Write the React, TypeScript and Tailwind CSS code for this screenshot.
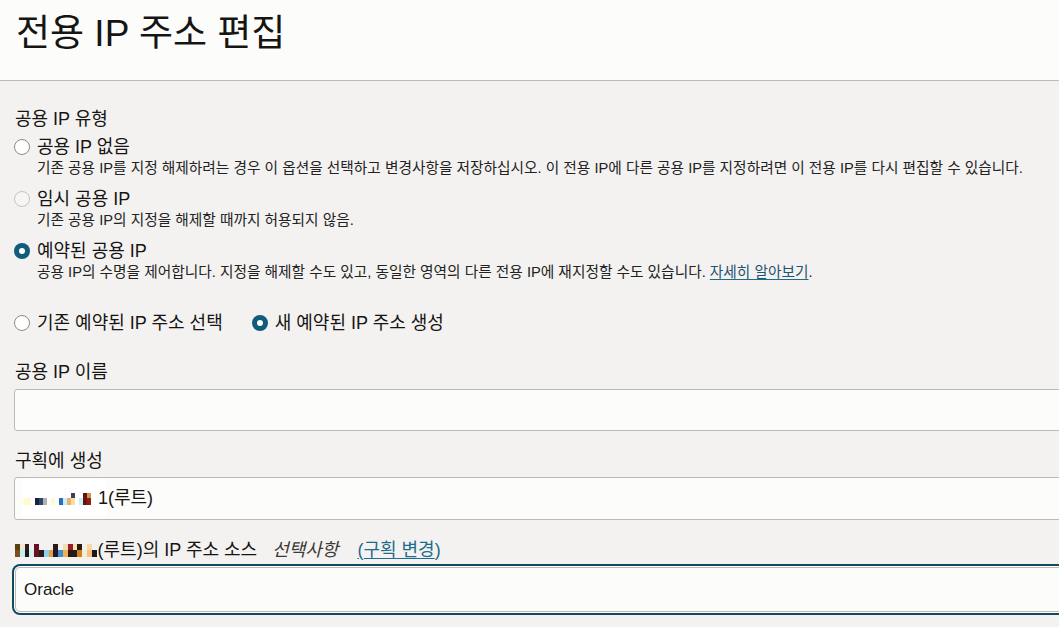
import React from "react";

type RState = "off" | "disabled" | "on";

function Radio({ state }: { state: RState }) {
  if (state === "on")
    return (
      <span className="flex h-4 w-4 shrink-0 items-center justify-center rounded-full bg-[#0f5c7d]">
        <span className="h-[6px] w-[6px] rounded-full bg-white" />
      </span>
    );
  if (state === "disabled")
    return <span className="h-4 w-4 shrink-0 rounded-full border border-[#c6c3bf] bg-[#f6f5f4]" />;
  return <span className="h-4 w-4 shrink-0 rounded-full border border-[#8e8a86] bg-white" />;
}

function Pixels({ rows, cell, heights }: { rows: string[][]; cell: number; heights: number[] }) {
  return (
    <span className="inline-flex flex-col">
      {rows.map((r, i) => (
        <span key={i} className="flex">
          {r.map((c, j) => (
            <span
              key={j}
              style={{ width: cell, height: heights[i], background: c || "transparent" }}
            />
          ))}
        </span>
      ))}
    </span>
  );
}

const selPix = [
  ["", "", "", "", "", "", "", "", "", "", "", "", "#4a3a5a", "", "", "#6a1010", "#d09050", "", ""],
  ["#fffbd0", "#fffbd0", "", "#1a2040", "#2a4a6a", "#b0b0b0", "", "#fffbd0", "", "#2a70c0", "#c8f0f8", "#f0b070", "#f8e0a0", "", "#c0f4f8", "#701010", "#8a2010", "", ""],
];

const labPix = [
  ["#5a4010", "#f0e8d0", "#2a2020", "", "#6a1020", "", "", "#f0f0f0", "#2a1a1a", "", "#f0e0b0", "#a01830", "#f0e8b0", "#2a1a10", "", "#f8d8a0", ""],
  ["#7a5020", "#c0f0f0", "#1a1a1a", "#d0f4f4", "#6a1020", "#2a1a1a", "#90d0f0", "#e0a040", "#1a1a30", "#4090d0", "#f0b050", "#2a1a10", "#202020", "#d08020", "#f0f0d0", "#f8c080", "#1a1a1a"],
];

export default function App() {
  return (
    <div className="h-screen w-full overflow-hidden bg-[#f3f2f1] font-['Liberation_Sans','Noto_Sans_CJK_KR',sans-serif] text-[#161513]">
      <header className="h-[81px] border-b border-[#bdb9b5] bg-[#fcfcfb] pl-[16px] pt-[12px]">
        <h1 className="text-[37px] font-normal leading-[44px]">전용 IP 주소 편집</h1>
      </header>

      <div className="w-[1100px] pl-[14px]">
        <div className="mt-[26px] flex h-[24px] items-center pl-[1px] text-[18px]">공용 IP 유형</div>

        <div className="mt-[4px] flex h-[24px] items-center gap-[7px] text-[18px]">
          <Radio state="off" />
          <span>공용 IP 없음</span>
        </div>
        <div className="flex h-[18px] items-center whitespace-nowrap pl-[23px] text-[14.7px] text-[#222]">
          기존 공용 IP를 지정 해제하려는 경우 이 옵션을 선택하고 변경사항을 저장하십시오. 이 전용 IP에 다른 공용 IP를 지정하려면 이 전용 IP를 다시 편집할 수 있습니다.
        </div>

        <div className="mt-[10px] flex h-[24px] items-center gap-[7px] text-[18px]">
          <Radio state="disabled" />
          <span>임시 공용 IP</span>
        </div>
        <div className="flex h-[18px] items-center whitespace-nowrap pl-[23px] text-[14.7px] text-[#222]">
          기존 공용 IP의 지정을 해제할 때까지 허용되지 않음.
        </div>

        <div className="mt-[10px] flex h-[24px] items-center gap-[7px] text-[18px]">
          <Radio state="on" />
          <span>예약된 공용 IP</span>
        </div>
        <div className="flex h-[18px] items-center whitespace-nowrap pl-[23px] text-[14.7px] text-[#222]">
          <span>
            공용 IP의 수명을 제어합니다. 지정을 해제할 수도 있고, 동일한 영역의 다른 전용 IP에 재지정할 수도 있습니다.{" "}
            <a className="text-[#1f5570] underline decoration-[#1f6b8a] underline-offset-2">자세히 알아보기</a>.
          </span>
        </div>

        <div className="mt-[30px] flex h-[24px] items-center text-[18px]">
          <div className="flex items-center gap-[7px]">
            <Radio state="off" />
            <span>기존 예약된 IP 주소 선택</span>
          </div>
          <div className="ml-[29px] flex items-center gap-[7px]">
            <Radio state="on" />
            <span>새 예약된 IP 주소 생성</span>
          </div>
        </div>

        <div className="mt-[25px] flex h-[24px] items-center pl-[1px] text-[18px]">공용 IP 이름</div>
        <div className="mt-[5px] h-[42px] rounded-[3px] border border-[#bdb9b5] bg-[#fcfcfb]" />

        <div className="mt-[18px] flex h-[24px] items-center pl-[1px] text-[18px]">구획에 생성</div>
        <div className="mt-[4px] flex h-[43px] items-center rounded-[3px] border border-[#bdb9b5] bg-[#fcfcfb] pl-[7px] text-[18px]">
          <span className="flex h-[40px] w-[84px] items-center rounded-[6px] bg-white pl-[1px]">
            <Pixels rows={selPix} cell={4} heights={[5, 7]} />
          </span>
          <span className="-ml-[8px]">1(루트)</span>
        </div>

        <div className="mt-[18px] flex h-[24px] items-center whitespace-nowrap text-[18px]">
          <span className="ml-[1px] mr-[1px] flex items-center">
            <Pixels rows={labPix} cell={4.8} heights={[6, 7]} />
          </span>
          <span>(루트)의 IP 주소 소스</span>
          <span className="ml-[15px] italic text-[#3d3935]">선택사항</span>
          <span className="ml-[19px] text-[#1f6b8a]">
            <a className="underline decoration-[#1f6b8a] underline-offset-2">(구획 변경</a>)
          </span>
        </div>
        <div className="ml-[1px] mt-[5px] flex h-[45px] items-center rounded-[5px] border border-[#bdb9b5] bg-[#fcfcfb] pl-[8px] text-[17px] shadow-[0_0_0_1px_#fcfcfb,0_0_0_3px_#0f4a61]">
          Oracle
        </div>
      </div>
    </div>
  );
}
